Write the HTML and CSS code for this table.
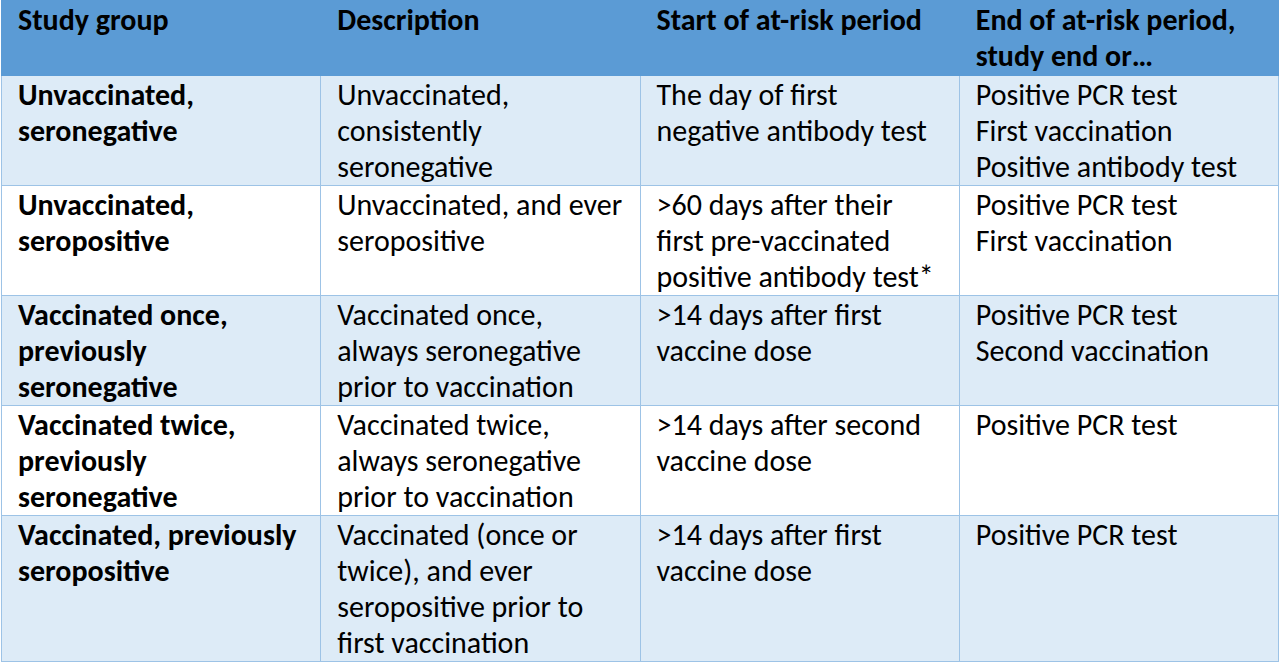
FILE: index.html
```html
<!DOCTYPE html>
<html lang="en">
<head>
<meta charset="utf-8">
<title>Study groups</title>
<link rel="stylesheet" href="styles.css">
</head>
<body>
<table class="study-table">
  <colgroup>
    <col class="c1"><col class="c2"><col class="c3"><col class="c4">
  </colgroup>
  <thead>
    <tr class="head-row">
      <th>Study group</th>
      <th>Description</th>
      <th>Start of at-risk period</th>
      <th>End of at-risk period,<br>study end or…</th>
    </tr>
  </thead>
  <tbody>
    <tr class="shaded">
      <td class="group">Unvaccinated,<br>seronegative</td>
      <td>Unvaccinated,<br>consistently<br>seronegative</td>
      <td>The day of first<br>negative antibody test</td>
      <td>Positive PCR test<br>First vaccination<br>Positive antibody test</td>
    </tr>
    <tr>
      <td class="group">Unvaccinated,<br>seropositive</td>
      <td>Unvaccinated, and ever<br>seropositive</td>
      <td>&gt;60 days after their<br>first pre-vaccinated<br>positive antibody test*</td>
      <td>Positive PCR test<br>First vaccination</td>
    </tr>
    <tr class="shaded">
      <td class="group">Vaccinated once,<br>previously<br>seronegative</td>
      <td>Vaccinated once,<br>always seronegative<br>prior to vaccination</td>
      <td>&gt;14 days after first<br>vaccine dose</td>
      <td>Positive PCR test<br>Second vaccination</td>
    </tr>
    <tr>
      <td class="group">Vaccinated twice,<br>previously<br>seronegative</td>
      <td>Vaccinated twice,<br>always seronegative<br>prior to vaccination</td>
      <td>&gt;14 days after second<br>vaccine dose</td>
      <td>Positive PCR test</td>
    </tr>
    <tr class="shaded">
      <td class="group">Vaccinated, previously<br>seropositive</td>
      <td>Vaccinated (once or<br>twice), and ever<br>seropositive prior to<br>first vaccination</td>
      <td>&gt;14 days after first<br>vaccine dose</td>
      <td>Positive PCR test</td>
    </tr>
  </tbody>
</table>
</body>
</html>
```

FILE: styles.css
```css
html, body {
  margin: 0;
  padding: 0;
  background: #ffffff;
}

.study-table {
  border-collapse: collapse;
  width: 1278px;
  margin: 0 0 0 1px;
  table-layout: fixed;
  font-family: Carlito, "Open Sans", sans-serif;
  font-size: 30px;
  line-height: 36px;
  color: #000000;
}

.c1 { width: 319px; }
.c2 { width: 319px; }
.c3 { width: 319px; }
.c4 { width: 319px; }

.study-table th,
.study-table td {
  border: 1px solid #9dc3e6;
  padding: 1px 6px 0 16px;
  text-align: left;
  vertical-align: top;
  white-space: nowrap;
}

.study-table th {
  background: #5b9bd5;
  font-weight: bold;
  border-color: #5b9bd5;
}

.head-row th {
  height: 75px;
  box-sizing: border-box;
}

.shaded td {
  background: #ddebf7;
}

.group {
  font-weight: bold;
}
```
